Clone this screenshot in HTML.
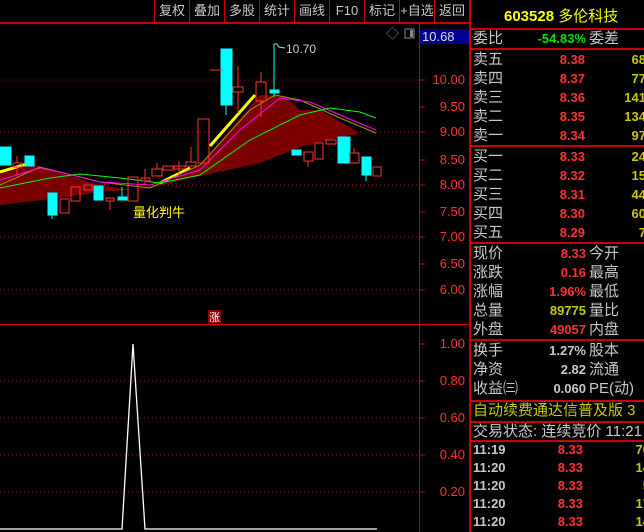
<!DOCTYPE html>
<html><head><meta charset="utf-8"><style>
*{margin:0;padding:0;box-sizing:border-box}
body{width:644px;height:532px;background:#000;overflow:hidden;position:relative;font-family:"Liberation Sans","Noto Sans CJK SC",sans-serif}
.a{position:absolute;white-space:nowrap}
.tb{position:absolute;top:0;height:22px;border-left:1px solid #c00;color:#c8c8c8;font-size:13px;line-height:22px;text-align:center}
.lab{position:absolute;left:473px;color:#c8c8c8;font-size:15px;line-height:19px;white-space:nowrap}
.num{position:absolute;font-size:13px;font-weight:bold;line-height:19px;text-align:right;font-family:"Liberation Sans",sans-serif;white-space:nowrap}
.hl{position:absolute;left:470px;width:174px;height:2px;background:#c00}
.ax{position:absolute;left:420px;width:45px;text-align:right;color:#ff3030;font-size:13px;font-family:"Liberation Sans",sans-serif}
</style></head><body>
<div class="a" style="left:0;top:22px;width:470px;height:2px;background:#c00"></div>
<div class="tb" style="left:154px;width:35px">复权</div>
<div class="tb" style="left:189px;width:35px">叠加</div>
<div class="tb" style="left:224px;width:35px">多股</div>
<div class="tb" style="left:259px;width:35px">统计</div>
<div class="tb" style="left:294px;width:35px">画线</div>
<div class="tb" style="left:329px;width:35px">F10</div>
<div class="tb" style="left:364px;width:35px">标记</div>
<div class="tb" style="left:399px;width:35px">+自选</div>
<div class="tb" style="left:434px;width:35px">返回</div>
<div class="a" style="left:419px;top:22px;width:1px;height:510px;background:#c00"></div>
<div class="a" style="left:469px;top:0;width:2px;height:532px;background:#c00"></div>
<div class="a" style="left:420px;top:29px;width:49px;height:15px;background:#000090;color:#ddd;font-size:13px;line-height:15px;padding-left:2px">10.68</div>
<div class="a" style="left:0;top:324px;width:470px;height:1px;background:#d00"></div>
<svg class="a" style="left:0;top:0" width="470" height="532">
<g stroke="#a01010" stroke-dasharray="1,3">
<line x1="0" y1="80" x2="419" y2="80"/><line x1="0" y1="132" x2="419" y2="132"/><line x1="0" y1="185" x2="419" y2="185"/><line x1="0" y1="237" x2="419" y2="237"/><line x1="0" y1="290" x2="419" y2="290"/>
<line x1="0" y1="381" x2="419" y2="381"/><line x1="0" y1="418" x2="419" y2="418"/><line x1="0" y1="455" x2="419" y2="455"/><line x1="0" y1="492" x2="419" y2="492"/>
</g>
<g stroke="#c00"><line x1="419" y1="80" x2="425" y2="80"/><line x1="419" y1="107" x2="425" y2="107"/><line x1="419" y1="132" x2="425" y2="132"/><line x1="419" y1="160" x2="425" y2="160"/><line x1="419" y1="185" x2="425" y2="185"/><line x1="419" y1="212" x2="425" y2="212"/><line x1="419" y1="237" x2="425" y2="237"/><line x1="419" y1="264" x2="425" y2="264"/><line x1="419" y1="290" x2="425" y2="290"/>
<line x1="419" y1="344" x2="425" y2="344"/><line x1="419" y1="381" x2="425" y2="381"/><line x1="419" y1="418" x2="425" y2="418"/><line x1="419" y1="455" x2="425" y2="455"/><line x1="419" y1="492" x2="425" y2="492"/></g>
<polygon fill="#7a0000" points="0,170 30,163 45,168 100,185 130,190 170,182 200,165 230,130 260,95 285,96 300,110 320,110 360,133 300,147 260,163 200,176 150,188 100,192 60,198 0,205"/>
<polyline fill="none" stroke="#ffff00" stroke-width="3" points="0,172 30,163"/>
<polyline fill="none" stroke="#ffff00" stroke-width="3" points="160,183 190,168"/>
<polyline fill="none" stroke="#ffff00" stroke-width="3" points="210,146 255,95"/>
<polyline fill="none" stroke="#999900" points="0,185 40,167 100,182 150,188 200,165 250,110 275,95 300,100 340,118 376,133"/>
<polyline fill="none" stroke="#ff00ff" points="0,180 40,168 60,172 100,182 150,185 200,170 240,130 280,98 310,102 340,115 376,130"/>
<polyline fill="none" stroke="#00ff00" points="0,188 50,178 80,174 120,178 160,183 200,175 250,140 300,115 330,108 360,112 376,118"/>
<g fill="#00ffff" stroke="#00ffff">
<rect x="0" y="147" width="11" height="18"/><rect x="25" y="156" width="9" height="10"/><rect x="48" y="193" width="9" height="22"/><line x1="52" y1="215" x2="52" y2="219"/>
<rect x="94" y="186" width="9" height="14"/><rect x="118" y="197" width="9" height="3"/><line x1="122" y1="187" x2="122" y2="197"/>
<rect x="221" y="49" width="11" height="56"/><line x1="226" y1="105" x2="226" y2="115"/>
<rect x="270" y="90" width="9" height="3"/><line x1="274" y1="44" x2="274" y2="97"/>
<rect x="292" y="150" width="9" height="5"/><rect x="338" y="137" width="12" height="26"/><rect x="362" y="157" width="9" height="18"/><line x1="366" y1="175" x2="366" y2="181"/>
</g>
<g fill="none" stroke="#ff3030">
<rect x="13" y="163" width="9" height="4"/><line x1="17" y1="156" x2="17" y2="163"/><line x1="17" y1="167" x2="17" y2="175"/>
<rect x="60" y="199" width="9" height="14"/><rect x="71" y="187" width="9" height="14"/><rect x="84" y="185" width="8" height="5"/>
<rect x="106" y="198" width="8" height="3"/><line x1="110" y1="201" x2="110" y2="210"/>
<rect x="128" y="177" width="10" height="24"/><rect x="141" y="178" width="9" height="3"/><line x1="145" y1="169" x2="145" y2="185"/>
<rect x="152" y="169" width="10" height="7"/><line x1="157" y1="163" x2="157" y2="169"/><rect x="163" y="166" width="10" height="4"/><rect x="174" y="166" width="11" height="3"/><line x1="179" y1="161" x2="179" y2="175"/>
<rect x="186" y="162" width="10" height="4"/><line x1="191" y1="147" x2="191" y2="162"/>
<rect x="198" y="119" width="11" height="44"/><line x1="210" y1="70" x2="222" y2="70"/>
<rect x="233" y="87" width="10" height="5"/><line x1="238" y1="66" x2="238" y2="87"/><line x1="238" y1="92" x2="238" y2="113"/>
<rect x="256" y="82" width="10" height="19"/><line x1="261" y1="72" x2="261" y2="82"/><line x1="261" y1="101" x2="261" y2="117"/>
<rect x="304" y="152" width="9" height="9"/><line x1="308" y1="161" x2="308" y2="167"/><rect x="315" y="143" width="8" height="16"/><rect x="326" y="140" width="10" height="4"/>
<rect x="350" y="153" width="9" height="10"/><line x1="354" y1="148" x2="354" y2="153"/><rect x="373" y="167" width="8" height="9"/>
</g>
<polyline fill="none" stroke="#ccc" points="274,44 277,44 279,47 285,48"/>
<text x="286" y="53" fill="#ccc" font-size="12" font-family="Liberation Sans">10.70</text>
<text x="386" y="38" fill="#888" font-size="13">◇</text>
<rect x="405" y="29" width="9" height="9" fill="none" stroke="#888"/><rect x="410" y="30" width="3" height="7" fill="#888"/>
<text x="133" y="217" fill="#ffff00" font-size="13" font-family="Noto Sans CJK SC">量化判牛</text>
<rect x="208" y="310" width="13" height="13" fill="#8b0000"/><text x="209" y="321" fill="#fff" font-size="11" font-family="Noto Sans CJK SC">涨</text>
<polyline fill="none" stroke="#fff" stroke-width="1.3" points="0,529 122,529 133,344 145,529 377,529"/>
</svg>
<div class="ax" style="top:72px">10.00</div><div class="ax" style="top:99px">9.50</div><div class="ax" style="top:124px">9.00</div><div class="ax" style="top:152px">8.50</div><div class="ax" style="top:177px">8.00</div><div class="ax" style="top:204px">7.50</div><div class="ax" style="top:229px">7.00</div><div class="ax" style="top:256px">6.50</div><div class="ax" style="top:282px">6.00</div>
<div class="ax" style="top:336px">1.00</div><div class="ax" style="top:373px">0.80</div><div class="ax" style="top:410px">0.60</div><div class="ax" style="top:447px">0.40</div><div class="ax" style="top:484px">0.20</div>

<div class="a" style="left:504px;top:5px;color:#ffff00;font-size:15px;font-weight:bold">603528 <span style="font-weight:normal">多伦科技</span></div>
<div class="hl" style="top:28px"></div>
<div class="lab" style="top:29px">委比</div><div class="num" style="left:500px;width:86px;top:29px;color:#00e000">-54.83%</div><div class="lab" style="left:589px;top:29px">委差</div>
<div class="hl" style="top:48px"></div>
<div class="lab" style="top:50px">卖五<br>卖四<br>卖三<br>卖二<br>卖一</div>
<div class="num" style="left:520px;width:65px;top:50px;color:#ff3030">8.38<br>8.37<br>8.36<br>8.35<br>8.34</div>
<div class="num" style="left:600px;width:46px;top:50px;color:#c8c800">68<br>77<br>141<br>134<br>97</div>
<div class="hl" style="top:145px"></div>
<div class="lab" style="top:147px">买一<br>买二<br>买三<br>买四<br>买五</div>
<div class="num" style="left:520px;width:65px;top:147px;color:#ff3030">8.33<br>8.32<br>8.31<br>8.30<br>8.29</div>
<div class="num" style="left:600px;width:46px;top:147px;color:#c8c800">24<br>15<br>44<br>60<br>7</div>
<div class="hl" style="top:242px"></div>
<div class="lab" style="top:244px">现价<br>涨跌<br>涨幅<br>总量<br>外盘</div>
<div class="num" style="left:500px;width:86px;top:244px;color:#ff3030">8.33<br>0.16<br>1.96%<br><span style="color:#c8c800">89775</span><br>49057</div>
<div class="lab" style="left:589px;top:244px">今开<br>最高<br>最低<br>量比<br>内盘</div>
<div class="hl" style="top:339px"></div>
<div class="lab" style="top:341px">换手<br>净资<br>收益㈢</div>
<div class="num" style="left:500px;width:86px;top:341px;color:#c8c8c8">1.27%<br>2.82<br>0.060</div>
<div class="lab" style="left:589px;top:341px">股本<br>流通<br>PE(动)</div>
<div class="hl" style="top:400px"></div>
<div class="lab" style="top:401px;color:#c8c800">自动续费通达信普及版 3</div>
<div class="hl" style="top:421px"></div>
<div class="lab" style="top:422px">交易状态: 连续竞价 11:21</div>
<div class="hl" style="top:440px"></div>
<div class="num" style="left:473px;top:441px;color:#c8c8c8;text-align:left;line-height:18px">11:19<br>11:20<br>11:20<br>11:20<br>11:20</div>
<div class="num" style="left:530px;width:53px;top:441px;color:#ff3030;line-height:18px">8.33<br>8.33<br>8.33<br>8.33<br>8.33</div>
<div class="num" style="left:620px;width:30px;top:441px;color:#c8c800;line-height:18px">70<br>14<br>5<br>17<br>14</div>
</body></html>
